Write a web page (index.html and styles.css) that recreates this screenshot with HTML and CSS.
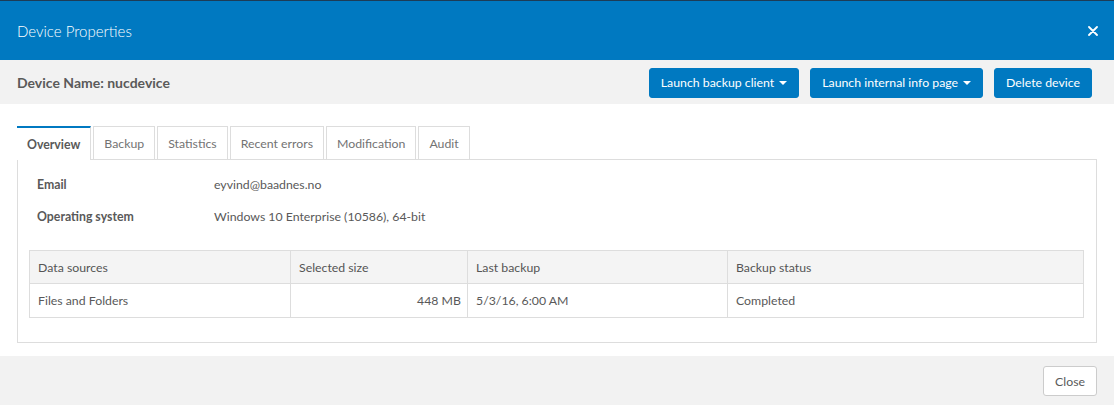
FILE: index.html
```html
<!DOCTYPE html>
<html>
<head>
<meta charset="utf-8">
<link rel="stylesheet" href="styles.css">
</head>
<body>
<div class="backdrop"></div>
<div class="modal">
  <header class="modal-header">
    <h1 class="modal-title">Device Properties</h1>
    <button class="close-x" aria-label="Close">
      <svg width="10" height="10" viewBox="0 0 10 10"><path d="M1 1 L9 9 M9 1 L1 9" stroke="#fff" stroke-width="1.8" stroke-linecap="round"/></svg>
    </button>
  </header>
  <div class="subheader">
    <div class="device-name">Device Name: nucdevice</div>
    <div class="actions">
      <button class="btn btn-primary">Launch backup client <span class="caret"></span></button>
      <button class="btn btn-primary">Launch internal info page <span class="caret"></span></button>
      <button class="btn btn-primary">Delete device</button>
    </div>
  </div>
  <div class="modal-body">
    <ul class="tabs">
      <li class="tab active">Overview</li>
      <li class="tab">Backup</li>
      <li class="tab">Statistics</li>
      <li class="tab">Recent errors</li>
      <li class="tab">Modification</li>
      <li class="tab">Audit</li>
    </ul>
    <div class="panel">
      <div class="info-row"><div class="info-label">Email</div><div class="info-value">eyvind@baadnes.no</div></div>
      <div class="info-row"><div class="info-label">Operating system</div><div class="info-value">Windows 10 Enterprise (10586), 64-bit</div></div>
      <table class="data-table">
        <colgroup>
          <col class="c1"><col class="c2"><col class="c3"><col class="c4">
        </colgroup>
        <thead>
          <tr><th>Data sources</th><th>Selected size</th><th>Last backup</th><th>Backup status</th></tr>
        </thead>
        <tbody>
          <tr><td>Files and Folders</td><td class="num">448 MB</td><td>5/3/16, 6:00 AM</td><td>Completed</td></tr>
        </tbody>
      </table>
    </div>
  </div>
  <footer class="modal-footer">
    <button class="btn btn-default">Close</button>
  </footer>
</div>
</body>
</html>
```
FILE: styles.css
```css
* { box-sizing: border-box; }
html, body { margin: 0; padding: 0; }
body {
  font-family: Lato, "Liberation Sans", sans-serif;
  font-size: 12.3px;
  color: #595959;
  background: #fff;
  width: 1114px;
  height: 405px;
  overflow: hidden;
}
.backdrop {
  height: 1px;
  background: #1d3c56;
}
.modal { display: flex; flex-direction: column; }
.modal-header {
  height: 59px;
  background: #0079c1;
  display: flex;
  align-items: center;
  justify-content: space-between;
  padding: 0 17px;
}
.modal-title {
  margin: 0;
  font-size: 15px;
  font-weight: 300;
  color: #fff;
}
.close-x {
  background: none;
  border: 0;
  padding: 0;
  width: 10px;
  height: 10px;
  display: flex;
  margin-right: -1px;
}
.subheader {
  height: 44px;
  background: #f2f2f2;
  display: flex;
  align-items: center;
  justify-content: space-between;
  padding: 1px 22px 0 17px;
}
.device-name {
  font-weight: 700;
  font-size: 14px;
  color: #5a5a5a;
}
.actions { display: flex; gap: 11px; }
.btn {
  font-family: inherit;
  font-size: 12.3px;
  height: 30px;
  border-radius: 3px;
  padding: 0 11px;
  display: flex;
  align-items: center;
  gap: 5px;
  cursor: pointer;
}
.btn-primary {
  background: #0079c1;
  border: 1px solid #0079c1;
  color: #fff;
}
.btn-default {
  background: #fff;
  border: 1px solid #ccc;
  color: #595959;
}
.caret {
  width: 0; height: 0;
  border-left: 4px solid transparent;
  border-right: 4px solid transparent;
  border-top: 4px solid #fff;
}
.modal-body {
  padding: 22px 17px 13px;
  background: #fff;
}
.tabs {
  list-style: none;
  margin: 0;
  padding: 0;
  display: flex;
  gap: 2px;
  height: 33px;
}
.tab {
  height: 33px;
  border: 1px solid #ddd;
  border-bottom: 0;
  padding: 0 10px;
  display: flex;
  align-items: center;
  color: #737373;
}
.tab.active {
  border-top: 2px solid #0079c1;
  border-left: 0;
  background: #fff;
  font-weight: 700;
  color: #595959;
  position: relative;
  margin-bottom: -1px;
  height: 34px;
}
.panel {
  border: 1px solid #ddd;
  padding: 8px 12px 24px 11px;
}
.info-row {
  display: flex;
  height: 32px;
  align-items: center;
  padding-left: 8px;
}
.info-label { width: 177px; font-weight: 700; }
.data-table {
  margin-top: 18px;
  width: 100%;
  border-collapse: collapse;
  table-layout: fixed;
}
.c1 { width: 261px; }
.c2 { width: 177px; }
.c3 { width: 260px; }
.data-table th, .data-table td {
  border: 1px solid #ddd;
  text-align: left;
  padding: 0 8px;
  font-weight: 400;
}
.data-table th { background: #f4f4f4; height: 33px; color: #555; }
.data-table td { height: 34px; }
.data-table td.num { text-align: right; padding-right: 6px; }
.modal-footer {
  height: 49px;
  background: #f2f2f2;
  display: flex;
  justify-content: flex-end;
  align-items: flex-start;
  padding: 10px 17px 0;
}
```
